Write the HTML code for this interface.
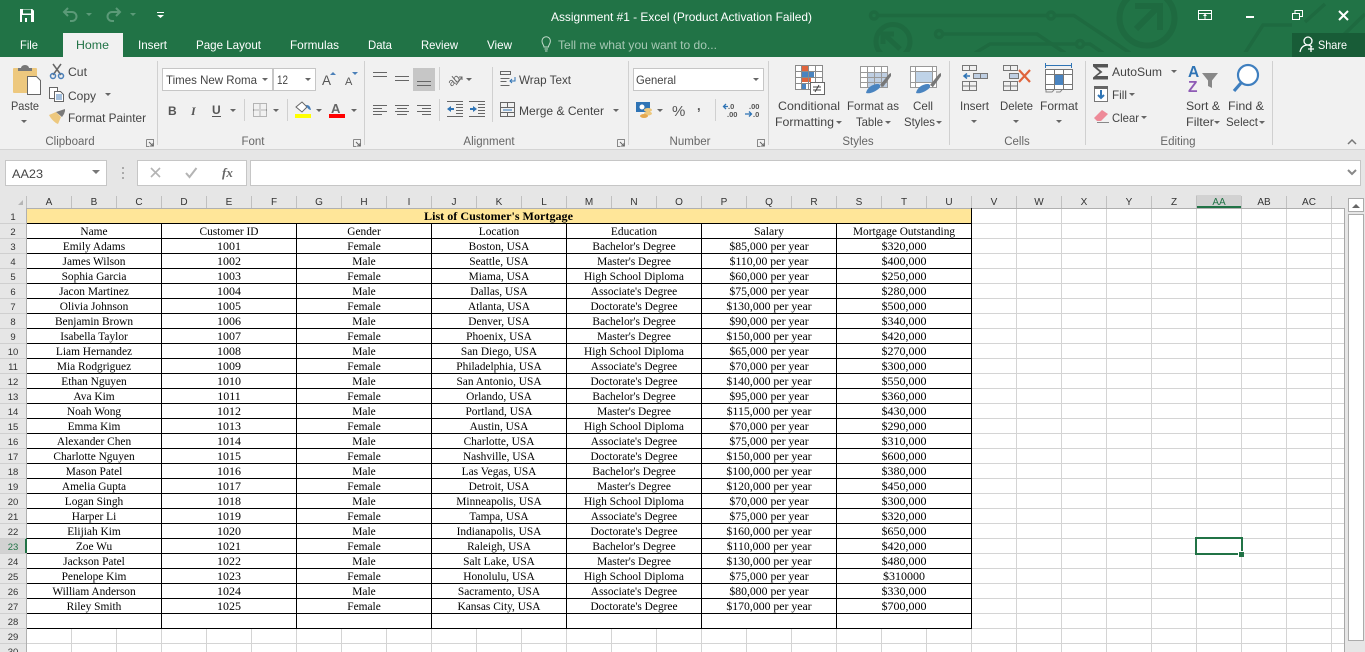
<!DOCTYPE html>
<html lang="en"><head><meta charset="utf-8"><title>Assignment #1 - Excel</title>
<style>
html,body{margin:0;padding:0;width:1365px;height:652px;overflow:hidden;background:#fff}
svg{display:block;font-family:"Liberation Sans",sans-serif}
.r{font-size:12px;fill:#444}
.w{font-size:12px;fill:#fff}
.l{font-size:11.5px;fill:#666;text-anchor:middle}
.s{font-family:"Liberation Serif",serif;font-size:12px;fill:#000;text-anchor:middle}
.ch{font-size:10px;fill:#333;text-anchor:middle}
.rh{font-size:9.5px;fill:#333;text-anchor:middle}
.c{shape-rendering:crispEdges}
</style></head><body>
<svg width="1365" height="652" viewBox="0 0 1365 652" xmlns="http://www.w3.org/2000/svg">
<defs>
<path id="ct" d="M0 0h6l-3 3z" fill="#666"/>
<g id="lau"><path d="M.5 .5h7v7M.5 .5v7h3" fill="none" stroke="#888"/><path d="M3 3l4 4M7 4v3h-3" fill="none" stroke="#666"/></g>
<pattern id="gr" patternUnits="userSpaceOnUse" x="26" y="208" width="45" height="15"><path d="M.5 0V15M0 .5H45" stroke="#d4d4d4" fill="none"/></pattern>
<clipPath id="cp"><rect x="0" y="0" width="1365" height="52"/></clipPath>
</defs>

<!-- title bar -->
<rect width="1365" height="57" fill="#217346"/>
<g clip-path="url(#cp)" fill="none" stroke="#1e6a40" stroke-width="3.500">
<circle cx="874" cy="15.500" r="3.500"/><path d="M878 15.500H1047M1055 15.500H1074L1130 53"/><circle cx="1051" cy="15.500" r="3.500"/>
<circle cx="939" cy="34" r="3.500"/><path d="M943 34H1037L1065 53"/>
<path d="M975 53L990 44H1076M1084 44H1090L1103 53"/><circle cx="1080" cy="44" r="3.500"/>
<circle cx="893" cy="41.500" r="17" stroke-width="5"/><path d="M886 36L900 49M883 44V34H894" stroke-width="5"/>
<circle cx="1147" cy="18" r="27.500" stroke-width="6"/><path d="M1136 29L1158 7M1135 6H1160V30" stroke-width="6"/>
<path d="M1245 53L1263 25H1292M1325 53L1365 14M1305 22L1325 4"/>
</g>
<rect x="1292" y="33" width="73" height="24" fill="#185c37"/>

<!-- QAT -->
<g class="c"><path d="M20 9h12l2 2v11h-14z" fill="#fff"/><rect x="23" y="9.500" width="8" height="4" fill="#217346"/><rect x="22" y="15" width="9" height="7" fill="#217346"/><rect x="25" y="18" width="2" height="4" fill="#fff"/></g>
<g fill="none" stroke="#5b9a78" stroke-width="2"><path d="M65 12h7a4.500 4.500 0 0 1 0 9h-2M68 8l-4 4 4 4"/><path d="M119 12h-7a4.500 4.500 0 0 0 0 9h2M116 8l4 4-4 4"/></g>
<path d="M86 13h6l-3 3z M130 13h6l-3 3z" fill="#5b9a78"/>
<path d="M157 12h7v1h-7z M157 15h7l-3.500 3z" fill="#fff"/>
<text x="551" y="21" class="w" textLength="261" lengthAdjust="spacingAndGlyphs">Assignment #1 - Excel (Product Activation Failed)</text>
<g fill="none" stroke="#fff" class="c"><rect x="1198.500" y="10.500" width="13" height="9"/><path d="M1198 13.500h14"/></g>
<path d="M1203 16l2-2.500 2 2.500h-1.500v3h-1v-3z" fill="#fff"/>
<rect x="1246" y="16" width="8" height="2" fill="#fff"/>
<g fill="none" stroke="#fff" class="c"><rect x="1292.500" y="13.500" width="7" height="6"/><path d="M1295 13v-2.500h7.500v6H1300"/></g>
<path d="M1339 11l9 9M1348 11l-9 9" stroke="#fff" stroke-width="2" fill="none"/>

<!-- tabs -->
<rect x="63" y="33" width="60" height="24" fill="#f1f1f1"/>
<text x="20" y="49" class="w" textLength="18" lengthAdjust="spacingAndGlyphs">File</text>
<text x="76" y="49" font-size="12" fill="#217346" textLength="33" lengthAdjust="spacingAndGlyphs">Home</text>
<text x="138" y="49" class="w" textLength="29" lengthAdjust="spacingAndGlyphs">Insert</text>
<text x="196" y="49" class="w" textLength="65" lengthAdjust="spacingAndGlyphs">Page Layout</text>
<text x="290" y="49" class="w" textLength="49" lengthAdjust="spacingAndGlyphs">Formulas</text>
<text x="368" y="49" class="w" textLength="24" lengthAdjust="spacingAndGlyphs">Data</text>
<text x="421" y="49" class="w" textLength="37" lengthAdjust="spacingAndGlyphs">Review</text>
<text x="487" y="49" class="w" textLength="25" lengthAdjust="spacingAndGlyphs">View</text>
<text x="558" y="49" font-size="12" fill="#a6c8b4" textLength="159" lengthAdjust="spacingAndGlyphs">Tell me what you want to do...</text>
<path d="M544 47c0-2-2-3-2-6a4.200 4.200 0 0 1 8.400 0c0 3-2 4-2 6zM544.500 49h3.500M545 51h2.500" fill="none" stroke="#c3dbcc"/>
<circle cx="1308" cy="41" r="4" fill="none" stroke="#fff" stroke-width="1.300"/><path d="M1300 52c1-5 4-7 8-7 2 0 3 1 4 2M1308 49h6M1311 46v6" fill="none" stroke="#fff" stroke-width="1.300"/>
<text x="1318" y="49" class="w" textLength="29" lengthAdjust="spacingAndGlyphs">Share</text>

<!-- ribbon -->
<rect y="57" width="1365" height="92" fill="#f1f1f1"/>
<rect y="149" width="1365" height="1" fill="#d4d4d4"/>
<rect y="150" width="1365" height="58" fill="#e6e6e6"/>
<path class="c" d="M157.500 61v84M364.500 61v84M628.500 61v84M768.500 61v84M949.500 61v84M1085.500 61v84M1272.500 61v84" stroke="#d0d0d0" fill="none"/>
<path class="c" d="M244.500 99v22M287.500 99v22M439.500 67v23M439.500 99v22M492.500 67v55M715.500 99v22" stroke="#d0d0d0" fill="none"/>

<!-- clipboard -->
<rect x="13" y="68" width="24" height="25" rx="1" fill="#edc87e"/>
<path d="M18 68h3a4 3 0 0 1 8 0h3v3H18z" fill="#777"/>
<path d="M27.500 76.500h9l4 4v14h-13z" fill="#fff" stroke="#666"/>
<text x="11" y="110" class="r" textLength="28" lengthAdjust="spacingAndGlyphs">Paste</text>
<use href="#ct" x="21" y="120"/>
<g fill="none" stroke-width="1.500"><path d="M53 64l8 11M61 64l-8 11" stroke="#666"/><circle cx="53" cy="76" r="2.500" stroke="#4a7fb8"/><circle cx="61" cy="76" r="2.500" stroke="#4a7fb8"/></g>
<text x="68" y="76" class="r" textLength="19" lengthAdjust="spacingAndGlyphs">Cut</text>
<g class="c" fill="#fff" stroke="#666"><path d="M49.500 87.500h8v11h-8z"/><path d="M54.500 91.500h6l3 3v7h-9z"/></g><path class="c" d="M56 95h6M56 97h6M56 99h6" stroke="#4a7fb8"/>
<text x="68" y="100" class="r" textLength="28" lengthAdjust="spacingAndGlyphs">Copy</text>
<use href="#ct" x="105" y="93"/>
<path d="M49 115l7-3 5 5-3 7c-3-1-7-5-9-9z" fill="#edc87e"/><path d="M56 112l6-2 3-1 0 2-1 3-2 3z" fill="#7a7a7a"/>
<text x="68" y="122" class="r" textLength="78" lengthAdjust="spacingAndGlyphs">Format Painter</text>
<text x="70" y="145" class="l">Clipboard</text>
<use href="#lau" x="146" y="139"/>

<!-- font -->
<g class="c" fill="#fff" stroke="#c6c6c6"><rect x="162.500" y="68.500" width="110" height="22"/><rect x="273.500" y="68.500" width="42" height="22"/><rect x="633.500" y="68.500" width="130" height="22"/></g>
<text x="166" y="84" class="r" textLength="91" lengthAdjust="spacingAndGlyphs">Times New Roma</text>
<use href="#ct" x="262" y="78"/><use href="#ct" x="305" y="78"/><use href="#ct" x="753" y="78"/>
<text x="277" y="84" class="r" textLength="11" lengthAdjust="spacingAndGlyphs">12</text>
<text x="322" y="85" font-size="13.500" fill="#555">A</text><path d="M330 75h6l-3-3z" fill="#4a7fb8"/>
<text x="345" y="85" font-size="11" fill="#555">A</text><path d="M352 72h6l-3 3z" fill="#4a7fb8"/>
<text x="168" y="115" font-size="12" font-weight="bold" fill="#555">B</text>
<text x="191" y="115" font-size="12" font-style="italic" font-weight="bold" fill="#555" font-family="Liberation Serif">I</text>
<text x="212" y="114" font-size="12" font-weight="bold" fill="#555">U</text><rect x="212" y="116" width="9" height="1" fill="#555"/>
<use href="#ct" x="230" y="109"/>
<path class="c" d="M253.500 103.500h13v13h-13zM260 103.500v13M253.500 110h13" fill="none" stroke="#777" stroke-dasharray="1 1"/>
<use href="#ct" x="273" y="109"/>
<path d="M296 107l6-5 5 5-5 5z" fill="#fff" stroke="#666"/><path d="M306 105c3 0 4 1 5 5-2 0-4-2-5-5z" fill="#4a7fb8"/>
<rect x="295" y="114" width="16" height="4" fill="#ff0"/>
<use href="#ct" x="316" y="109"/>
<text x="331" y="113" font-size="13" font-weight="bold" fill="#666">A</text><rect x="329" y="114" width="16" height="4" fill="#f00"/>
<use href="#ct" x="351" y="109"/>
<text x="253" y="145" class="l">Font</text>
<use href="#lau" x="353" y="139"/>

<!-- alignment -->
<rect class="c" x="413" y="68" width="22" height="23" fill="#c6c6c6"/>
<path class="c" stroke="#666" fill="none" d="M373 72.500h14M373 76.500h14M395 76.500h14M395 80.500h14M417 81.500h14M417 85.500h14M373 105.500h14M373 108.500h9M373 111.500h14M373 114.500h9M395 105.500h14M397 108.500h10M395 111.500h14M397 114.500h10M417 105.500h14M422 108.500h9M417 111.500h14M422 114.500h9"/>
<text x="447" y="85" font-size="11" fill="#666" transform="rotate(-40 452 80)">ab</text><path d="M456 85l6-8M459 77h3v3" stroke="#666" fill="none"/>
<use href="#ct" x="466" y="78"/>
<path class="c" stroke="#666" fill="none" d="M456 104.500h7M456 107.500h7M456 110.500h7M456 113.500h7M447 116.500h16M447 101.500h16M478 104.500h7M478 107.500h7M478 110.500h7M478 113.500h7M469 116.500h16M469 101.500h16"/>
<path d="M447 109l4-3v2h3v2h-3v2z M477 109l-4-3v2h-3v2h3v2z" fill="#2f74b5"/>
<g fill="none" stroke="#666" class="c"><rect x="500.500" y="71.500" width="10" height="3"/><path d="M500.500 78.500h9M500.500 81.500h6M500.500 85.500h9"/></g>
<path d="M515 77v4h-5M512 79l-2 2 2 2" fill="none" stroke="#2f74b5"/>
<text x="519" y="84" class="r" textLength="52" lengthAdjust="spacingAndGlyphs">Wrap Text</text>
<g fill="none" stroke="#666" class="c"><rect x="500.500" y="102.500" width="14" height="14"/><path d="M500 107.500h15M500 112.500h15M507.500 102v5M507.500 113v4"/></g>
<path d="M503 110h9" stroke="#2f74b5"/>
<text x="519" y="115" class="r" textLength="85" lengthAdjust="spacingAndGlyphs">Merge &amp; Center</text>
<use href="#ct" x="613" y="109"/>
<text x="489" y="145" class="l">Alignment</text>
<use href="#lau" x="617" y="139"/>

<!-- number -->
<text x="636" y="84" class="r" textLength="40" lengthAdjust="spacingAndGlyphs">General</text>
<rect class="c" x="636" y="102" width="14" height="10" fill="#2f74b5"/><circle cx="642" cy="107" r="2.500" fill="#fff"/>
<ellipse cx="648" cy="110" rx="4" ry="2" fill="#edc87e"/><ellipse cx="648" cy="113.500" rx="4" ry="2" fill="#edc87e"/><ellipse cx="644" cy="116" rx="4" ry="2" fill="#e5a84e"/>
<use href="#ct" x="657" y="109"/>
<text x="672" y="116" font-size="15" fill="#555">%</text>
<text x="697" y="110" font-size="13" font-weight="bold" fill="#555">,</text>
<text x="728" y="109" font-size="7.500" fill="#555" font-weight="bold">.0</text><text x="727" y="117" font-size="7.500" fill="#555" font-weight="bold">.00</text>
<path d="M724 106.500h4M726 104l-2.500 2.500 2.500 2.500" fill="none" stroke="#2f74b5" stroke-width="1.300"/>
<text x="749" y="109" font-size="7.500" fill="#555" font-weight="bold">.00</text><text x="753" y="117" font-size="7.500" fill="#555" font-weight="bold">.0</text>
<path d="M745 114h6M749 111.500l2.500 2.500-2.500 2.500" fill="none" stroke="#2f74b5" stroke-width="1.300"/>
<text x="690" y="145" class="l">Number</text>
<use href="#lau" x="757" y="139"/>

<!-- styles -->
<g class="c">
<rect x="795" y="65" width="27" height="24" fill="#fff"/>
<rect x="802" y="66" width="6" height="5" fill="#e0643c"/><rect x="802" y="71" width="12" height="6" fill="#4a84c0"/><rect x="802" y="77" width="9" height="5" fill="#e0643c"/><rect x="802" y="83" width="4" height="6" fill="#4a84c0"/>
<path d="M795.500 65.500h27v24h-27zM801.500 65v24M808.500 65v24M815.500 65v24M795 71.500h27M795 77.500h27M795 83.500h27" fill="none" stroke="#8a8a8a"/>
<rect x="810.500" y="82.500" width="14" height="12" fill="#fff" stroke="#666"/></g>
<path d="M813 87h8M813 90h8M819 85l-4 7" stroke="#444" fill="none"/>
<text x="778" y="110" class="r" textLength="62" lengthAdjust="spacingAndGlyphs">Conditional</text>
<text x="775" y="126" class="r" textLength="59" lengthAdjust="spacingAndGlyphs">Formatting</text>
<use href="#ct" x="836" y="121"/>
<g class="c"><rect x="860" y="66" width="27" height="22" fill="#fff"/><rect x="867" y="72" width="20" height="15" fill="#bfcfe3"/>
<path d="M860.500 66.500h27v21h-27zM867.500 66v22M874.500 66v22M881.500 66v22M860 72.500h28M860 77.500h28M860 82.500h28" fill="none" stroke="#999"/></g>
<path d="M880 85l9-11 2-1 0 3-8 11z" fill="#777"/><path d="M866 93c1-5 6-9 12-9 3 0 3 4-1 6-3 2-7 4-11 3z" fill="#4a84c0"/>
<text x="847" y="110" class="r" textLength="52" lengthAdjust="spacingAndGlyphs">Format as</text>
<text x="856" y="126" class="r" textLength="27" lengthAdjust="spacingAndGlyphs">Table</text>
<use href="#ct" x="885" y="121"/>
<g class="c"><rect x="910" y="66" width="27" height="22" fill="#fff"/><rect x="916" y="71" width="16" height="12" fill="#bfd3e8"/>
<path d="M910.500 66.500h26v21h-26zM915.500 66v22M932.500 66v22M910 71.500h27M910 82.500h27" fill="none" stroke="#999"/></g>
<path d="M930 85l9-11 2-1 0 3-8 11z" fill="#777"/><path d="M916 93c1-5 6-9 12-9 3 0 3 4-1 6-3 2-7 4-11 3z" fill="#4a84c0"/>
<text x="913" y="110" class="r" textLength="20" lengthAdjust="spacingAndGlyphs">Cell</text>
<text x="904" y="126" class="r" textLength="31" lengthAdjust="spacingAndGlyphs">Styles</text>
<use href="#ct" x="936" y="121"/>
<text x="858" y="145" class="l">Styles</text>

<!-- cells -->
<g class="c" fill="none" stroke="#777">
<path d="M962.500 65.500h14v5h-14zM969.500 65v5M962.500 81.500h14v9h-14zM969.500 81v9M962 86h14"/>
<rect x="973.500" y="73.500" width="14" height="5" fill="#bfcfe3"/><path d="M980.500 73v5"/>
<path d="M1003.500 65.500h14v5h-14zM1010.500 65v5M1003.500 81.500h14v9h-14zM1010.500 81v9M1003 86h14"/>
<rect x="1009.500" y="73.500" width="9" height="5" fill="#bfcfe3"/>
<rect x="1045.500" y="69.500" width="27" height="20" fill="#fff"/><path d="M1054.500 69v21M1063.500 69v21M1045 74.500h28M1045 84.500h28"/>
</g>
<path d="M970 76h-5M967 73.500l-3 2.500 3 2.500" fill="none" stroke="#2f74b5" stroke-width="1.500"/>
<path d="M1019 70l11 12M1030 70l-11 12" stroke="#e0643c" stroke-width="2.200" fill="none"/>
<rect class="c" x="1055" y="75" width="8" height="10" fill="#4a84c0"/>
<path class="c" d="M1045.500 63v5M1071.500 63v5M1046 65.500h25" stroke="#2f74b5" fill="none"/>
<path d="M1046 90v2h6l2-2M1056 92h4l2-2" fill="none" stroke="#888"/>
<text x="960" y="110" class="r" textLength="29" lengthAdjust="spacingAndGlyphs">Insert</text>
<text x="1000" y="110" class="r" textLength="33" lengthAdjust="spacingAndGlyphs">Delete</text>
<text x="1040" y="110" class="r" textLength="38" lengthAdjust="spacingAndGlyphs">Format</text>
<use href="#ct" x="971" y="120"/><use href="#ct" x="1013" y="120"/><use href="#ct" x="1056" y="120"/>
<text x="1017" y="145" class="l">Cells</text>

<!-- editing -->
<path d="M1093 64h15v3.500h-11l5.500 4.500-5.500 4h11v3.500h-15v-2l6.500-5.500-6.500-5.500z" fill="#555"/>
<text x="1112" y="76" class="r" textLength="50" lengthAdjust="spacingAndGlyphs">AutoSum</text>
<use href="#ct" x="1171" y="70"/>
<rect class="c" x="1094.500" y="86.500" width="13" height="15" fill="#fff" stroke="#777"/><rect class="c" x="1094" y="86" width="14" height="3" fill="#666"/>
<path d="M1101 90v8M1098 95l3 3 3-3" stroke="#2f74b5" stroke-width="2" fill="none"/>
<text x="1112" y="99" class="r" textLength="15" lengthAdjust="spacingAndGlyphs">Fill</text>
<use href="#ct" x="1129" y="93"/>
<path d="M1094 118l8-8 6 4-7 7h-4z" fill="#ee8a98"/><path d="M1097 122.500h12" stroke="#888"/>
<text x="1112" y="122" class="r" textLength="27" lengthAdjust="spacingAndGlyphs">Clear</text>
<use href="#ct" x="1141" y="116"/>
<text x="1188" y="77" font-size="15.500" font-weight="bold" fill="#2f74b5">A</text>
<text x="1188" y="92" font-size="15.500" font-weight="bold" fill="#8e5bb5">Z</text>
<path d="M1202 73h16l-6 7.500v7.500l-4-2v-5.500z" fill="#888"/>
<text x="1186" y="110" class="r" textLength="34" lengthAdjust="spacingAndGlyphs">Sort &amp;</text>
<text x="1186" y="126" class="r" textLength="28" lengthAdjust="spacingAndGlyphs">Filter</text>
<use href="#ct" x="1214" y="121"/>
<circle cx="1248" cy="75" r="10" fill="#fff" stroke="#3f7fbf" stroke-width="2.200"/><path d="M1241 83l-7 8" stroke="#3f7fbf" stroke-width="3.200" fill="none"/>
<text x="1228" y="110" class="r" textLength="36" lengthAdjust="spacingAndGlyphs">Find &amp;</text>
<text x="1226" y="126" class="r" textLength="32" lengthAdjust="spacingAndGlyphs">Select</text>
<use href="#ct" x="1259" y="121"/>
<text x="1178" y="145" class="l">Editing</text>
<path d="M1348 144l4-4 4 4" fill="none" stroke="#777" stroke-width="1.500"/>

<!-- formula bar -->
<g class="c" fill="#fff" stroke="#c6c6c6"><rect x="5.500" y="160.500" width="101" height="25"/><rect x="137.500" y="160.500" width="109" height="25"/><rect x="250.500" y="160.500" width="1110" height="25"/></g>
<text x="12" y="178" font-size="12" fill="#444" textLength="31" lengthAdjust="spacingAndGlyphs">AA23</text>
<path d="M92 170h8l-4 4z" fill="#777"/>
<path class="c" d="M122 167h2v2h-2zM122 172h2v2h-2zM122 177h2v2h-2z" fill="#aaa"/>
<path d="M151 168l9 9M160 168l-9 9" stroke="#b4b4b4" stroke-width="1.600" fill="none"/>
<path d="M186 173l3.500 4 7-9" stroke="#b4b4b4" stroke-width="2" fill="none"/>
<text x="222" y="177" font-size="13" font-style="italic" font-weight="bold" font-family="Liberation Serif" fill="#666">fx</text>
<path d="M1348 170l4 4 4-4" fill="none" stroke="#888" stroke-width="2"/>

<!-- grid -->
<rect x="27" y="209" width="1317" height="443" fill="#fff"/>
<rect x="26" y="208" width="1318" height="444" fill="url(#gr)"/>
<rect x="1344" y="195" width="21" height="457" fill="#e6e6e6"/>
<rect class="c" x="1344" y="208" width="1" height="444" fill="#a8a8a8"/>
<rect class="c" x="1348.500" y="198.500" width="15" height="13" fill="#fff" stroke="#ababab"/>
<path d="M1352 208h8l-4-4z" fill="#666"/>
<rect class="c" x="1348.500" y="214.500" width="15" height="426" fill="#fff" stroke="#ababab"/>

<!-- headers -->
<rect class="c" x="0" y="195" width="1344" height="13" fill="#e6e6e6"/>
<path d="M18 205h5v-5z" fill="#b5b5b5"/>
<rect class="c" x="1196" y="195" width="45" height="13" fill="#d2d2d2"/>
<rect class="c" x="1196" y="206" width="45" height="2" fill="#217346"/>
<rect class="c" x="0" y="208" width="1344" height="1" fill="#b0b0b0"/>
<rect class="c" x="0" y="208" width="26" height="444" fill="#e6e6e6"/>
<rect class="c" x="0" y="538" width="26" height="15" fill="#d2d2d2"/>
<rect class="c" x="26" y="208" width="1" height="444" fill="#b0b0b0"/>
<rect class="c" x="25" y="538" width="2" height="15" fill="#217346"/>
<path class="c" stroke="#c0c0c0" fill="none" d="M71.500 196v12M116.500 196v12M161.500 196v12M206.500 196v12M251.500 196v12M296.500 196v12M341.500 196v12M386.500 196v12M431.500 196v12M476.500 196v12M521.500 196v12M566.500 196v12M611.500 196v12M656.500 196v12M701.500 196v12M746.500 196v12M791.500 196v12M836.500 196v12M881.500 196v12M926.500 196v12M971.500 196v12M1016.500 196v12M1061.500 196v12M1106.500 196v12M1151.500 196v12M1196.500 196v12M1241.500 196v12M1286.500 196v12M1331.500 196v12M26.500 196v12"/>
<path class="c" stroke="#cfcfcf" fill="none" d="M0 223.500h26M0 238.500h26M0 253.500h26M0 268.500h26M0 283.500h26M0 298.500h26M0 313.500h26M0 328.500h26M0 343.500h26M0 358.500h26M0 373.500h26M0 388.500h26M0 403.500h26M0 418.500h26M0 433.500h26M0 448.500h26M0 463.500h26M0 478.500h26M0 493.500h26M0 508.500h26M0 523.500h26M0 538.500h26M0 553.500h26M0 568.500h26M0 583.500h26M0 598.500h26M0 613.500h26M0 628.500h26M0 643.500h26"/>
<g class="ch">
<text x="49" y="205">A</text><text x="94" y="205">B</text><text x="139" y="205">C</text><text x="184" y="205">D</text><text x="229" y="205">E</text><text x="274" y="205">F</text><text x="319" y="205">G</text><text x="364" y="205">H</text><text x="409" y="205">I</text><text x="454" y="205">J</text><text x="499" y="205">K</text><text x="544" y="205">L</text><text x="589" y="205">M</text><text x="634" y="205">N</text><text x="679" y="205">O</text><text x="724" y="205">P</text><text x="769" y="205">Q</text><text x="814" y="205">R</text><text x="859" y="205">S</text><text x="904" y="205">T</text><text x="949" y="205">U</text><text x="994" y="205">V</text><text x="1039" y="205">W</text><text x="1084" y="205">X</text><text x="1129" y="205">Y</text><text x="1174" y="205">Z</text><text x="1219" y="205" style="fill:#217346">AA</text><text x="1264" y="205">AB</text><text x="1309" y="205">AC</text>
</g>
<g class="rh">
<text x="13" y="220">1</text><text x="13" y="235">2</text><text x="13" y="250">3</text><text x="13" y="265">4</text><text x="13" y="280">5</text><text x="13" y="295">6</text><text x="13" y="310">7</text><text x="13" y="325">8</text><text x="13" y="340">9</text><text x="13" y="355">10</text><text x="13" y="370">11</text><text x="13" y="385">12</text><text x="13" y="400">13</text><text x="13" y="415">14</text><text x="13" y="430">15</text><text x="13" y="445">16</text><text x="13" y="460">17</text><text x="13" y="475">18</text><text x="13" y="490">19</text><text x="13" y="505">20</text><text x="13" y="520">21</text><text x="13" y="535">22</text><text x="13" y="550" style="fill:#217346">23</text><text x="13" y="565">24</text><text x="13" y="580">25</text><text x="13" y="595">26</text><text x="13" y="610">27</text><text x="13" y="625">28</text><text x="13" y="640">29</text><text x="13" y="655">30</text>
</g>

<!-- table -->
<rect class="c" x="27" y="209" width="944" height="420" fill="#fff"/>
<rect class="c" x="27" y="209" width="944" height="14" fill="#ffe699"/>
<path class="c" stroke="#000" fill="none" d="M27 223.500H972M27 238.500H972M27 253.500H972M27 268.500H972M27 283.500H972M27 298.500H972M27 313.500H972M27 328.500H972M27 343.500H972M27 358.500H972M27 373.500H972M27 388.500H972M27 403.500H972M27 418.500H972M27 433.500H972M27 448.500H972M27 463.500H972M27 478.500H972M27 493.500H972M27 508.500H972M27 523.500H972M27 538.500H972M27 553.500H972M27 568.500H972M27 583.500H972M27 598.500H972M27 613.500H972M27 628.500H972M161.500 223V629M296.500 223V629M431.500 223V629M566.500 223V629M701.500 223V629M836.500 223V629M971.500 208V629"/>
<text class="s" x="498.500" y="220" style="font-weight:bold" textLength="149" lengthAdjust="spacingAndGlyphs">List of Customer's Mortgage</text>
<g class="s" transform="translate(94,0) scale(.95,1)"><text y="235">Name</text><text y="250">Emily Adams</text><text y="265">James Wilson</text><text y="280">Sophia Garcia</text><text y="295">Jacon Martinez</text><text y="310">Olivia Johnson</text><text y="325">Benjamin Brown</text><text y="340">Isabella Taylor</text><text y="355">Liam Hernandez</text><text y="370">Mia Rodgriguez</text><text y="385">Ethan Nguyen</text><text y="400">Ava Kim</text><text y="415">Noah Wong</text><text y="430">Emma Kim</text><text y="445">Alexander Chen</text><text y="460">Charlotte Nguyen</text><text y="475">Mason Patel</text><text y="490">Amelia Gupta</text><text y="505">Logan Singh</text><text y="520">Harper Li</text><text y="535">Elijiah Kim</text><text y="550">Zoe Wu</text><text y="565">Jackson Patel</text><text y="580">Penelope Kim</text><text y="595">William Anderson</text><text y="610">Riley Smith</text></g>
<g class="s" transform="translate(229,0)"><text y="235" textLength="59" lengthAdjust="spacingAndGlyphs">Customer ID</text><text y="250">1001</text><text y="265">1002</text><text y="280">1003</text><text y="295">1004</text><text y="310">1005</text><text y="325">1006</text><text y="340">1007</text><text y="355">1008</text><text y="370">1009</text><text y="385">1010</text><text y="400">1011</text><text y="415">1012</text><text y="430">1013</text><text y="445">1014</text><text y="460">1015</text><text y="475">1016</text><text y="490">1017</text><text y="505">1018</text><text y="520">1019</text><text y="535">1020</text><text y="550">1021</text><text y="565">1022</text><text y="580">1023</text><text y="595">1024</text><text y="610">1025</text></g>
<g class="s" transform="translate(364,0) scale(.95,1)"><text y="235">Gender</text><text y="250">Female</text><text y="265">Male</text><text y="280">Female</text><text y="295">Male</text><text y="310">Female</text><text y="325">Male</text><text y="340">Female</text><text y="355">Male</text><text y="370">Female</text><text y="385">Male</text><text y="400">Female</text><text y="415">Male</text><text y="430">Female</text><text y="445">Male</text><text y="460">Female</text><text y="475">Male</text><text y="490">Female</text><text y="505">Male</text><text y="520">Female</text><text y="535">Male</text><text y="550">Female</text><text y="565">Male</text><text y="580">Female</text><text y="595">Male</text><text y="610">Female</text></g>
<g class="s" transform="translate(499,0) scale(.95,1)"><text y="235">Location</text><text y="250">Boston, USA</text><text y="265">Seattle, USA</text><text y="280">Miama, USA</text><text y="295">Dallas, USA</text><text y="310">Atlanta, USA</text><text y="325">Denver, USA</text><text y="340">Phoenix, USA</text><text y="355">San Diego, USA</text><text y="370">Philadelphia, USA</text><text y="385">San Antonio, USA</text><text y="400">Orlando, USA</text><text y="415">Portland, USA</text><text y="430">Austin, USA</text><text y="445">Charlotte, USA</text><text y="460">Nashville, USA</text><text y="475">Las Vegas, USA</text><text y="490">Detroit, USA</text><text y="505">Minneapolis, USA</text><text y="520">Tampa, USA</text><text y="535">Indianapolis, USA</text><text y="550">Raleigh, USA</text><text y="565">Salt Lake, USA</text><text y="580">Honolulu, USA</text><text y="595">Sacramento, USA</text><text y="610">Kansas City, USA</text></g>
<g class="s" transform="translate(634,0) scale(.95,1)"><text y="235">Education</text><text y="250">Bachelor's Degree</text><text y="265">Master's Degree</text><text y="280">High School Diploma</text><text y="295">Associate's Degree</text><text y="310">Doctorate's Degree</text><text y="325">Bachelor's Degree</text><text y="340">Master's Degree</text><text y="355">High School Diploma</text><text y="370">Associate's Degree</text><text y="385">Doctorate's Degree</text><text y="400">Bachelor's Degree</text><text y="415">Master's Degree</text><text y="430">High School Diploma</text><text y="445">Associate's Degree</text><text y="460">Doctorate's Degree</text><text y="475">Bachelor's Degree</text><text y="490">Master's Degree</text><text y="505">High School Diploma</text><text y="520">Associate's Degree</text><text y="535">Doctorate's Degree</text><text y="550">Bachelor's Degree</text><text y="565">Master's Degree</text><text y="580">High School Diploma</text><text y="595">Associate's Degree</text><text y="610">Doctorate's Degree</text></g>
<g class="s" transform="translate(769,0) scale(.98,1)"><text y="235">Salary</text><text y="250">$85,000 per year</text><text y="265">$110,00 per year</text><text y="280">$60,000 per year</text><text y="295">$75,000 per year</text><text y="310">$130,000 per year</text><text y="325">$90,000 per year</text><text y="340">$150,000 per year</text><text y="355">$65,000 per year</text><text y="370">$70,000 per year</text><text y="385">$140,000 per year</text><text y="400">$95,000 per year</text><text y="415">$115,000 per year</text><text y="430">$70,000 per year</text><text y="445">$75,000 per year</text><text y="460">$150,000 per year</text><text y="475">$100,000 per year</text><text y="490">$120,000 per year</text><text y="505">$70,000 per year</text><text y="520">$75,000 per year</text><text y="535">$160,000 per year</text><text y="550">$110,000 per year</text><text y="565">$130,000 per year</text><text y="580">$75,000 per year</text><text y="595">$80,000 per year</text><text y="610">$170,000 per year</text></g>
<g class="s" transform="translate(904,0)"><text y="235" textLength="102" lengthAdjust="spacingAndGlyphs">Mortgage Outstanding</text><text y="250">$320,000</text><text y="265">$400,000</text><text y="280">$250,000</text><text y="295">$280,000</text><text y="310">$500,000</text><text y="325">$340,000</text><text y="340">$420,000</text><text y="355">$270,000</text><text y="370">$300,000</text><text y="385">$550,000</text><text y="400">$360,000</text><text y="415">$430,000</text><text y="430">$290,000</text><text y="445">$310,000</text><text y="460">$600,000</text><text y="475">$380,000</text><text y="490">$450,000</text><text y="505">$300,000</text><text y="520">$320,000</text><text y="535">$650,000</text><text y="550">$420,000</text><text y="565">$480,000</text><text y="580">$310000</text><text y="595">$330,000</text><text y="610">$700,000</text></g>

<!-- selection -->
<rect class="c" x="1196" y="538" width="46" height="16" fill="none" stroke="#217346" stroke-width="2"/>
<rect class="c" x="1238" y="551" width="6" height="6" fill="#fff"/>
<rect class="c" x="1239" y="552" width="5" height="5" fill="#217346"/>
</svg>
</body></html>
